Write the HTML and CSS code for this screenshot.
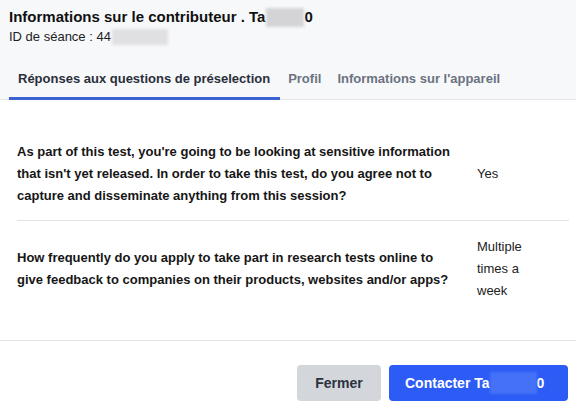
FILE: index.html
```html
<!DOCTYPE html>
<html lang="fr">
<head>
<meta charset="utf-8">
<link rel="stylesheet" href="styles.css">
</head>
<body>
<div class="modal">
  <header class="head">
    <h1 class="title">Informations sur le contributeur . Ta<span class="blur blur-title"></span>0</h1>
    <div class="session">ID de séance : 44<span class="blur blur-id"></span></div>
    <nav class="tabs">
      <span class="tab active">Réponses aux questions de préselection</span>
      <span class="tab">Profil</span>
      <span class="tab">Informations sur l'appareil</span>
    </nav>
  </header>
  <main class="body">
    <div class="row">
      <div class="q">As part of this test, you're going to be looking at sensitive information that isn't yet released. In order to take this test, do you agree not to capture and disseminate anything from this session?</div>
      <div class="a">Yes</div>
    </div>
    <div class="row">
      <div class="q">How frequently do you apply to take part in research tests online to give feedback to companies on their products, websites and/or apps?</div>
      <div class="a">Multiple times a week</div>
    </div>
  </main>
  <footer class="foot">
    <button class="btn btn-close">Fermer</button>
    <button class="btn btn-primary">Contacter Ta<span class="blur blur-btn"></span>0</button>
  </footer>
</div>
</body>
</html>
```
FILE: styles.css
```css
* { box-sizing: border-box; }
html, body { margin: 0; padding: 0; }
body {
  width: 576px;
  height: 405px;
  overflow: hidden;
  background: #ffffff;
  font-family: "Liberation Sans", Arial, sans-serif;
  color: #1a1a1a;
}
.modal { display: flex; flex-direction: column; }
.head {
  background: #f7f8fa;
  padding: 7px 0 0 9px;
  border-bottom: 1px solid #e3e5e8;
}
.title {
  margin: 0;
  font-size: 15px;
  font-weight: 700;
  line-height: 20px;
  color: #111;
  display: flex;
  align-items: center;
}
.session {
  margin-top: 1px;
  font-size: 13px;
  line-height: 18px;
  color: #222;
  display: flex;
  align-items: center;
}
.blur {
  display: inline-block;
  background: #d4d4d6;
  filter: blur(1.5px);
}
.blur-title { width: 38px; height: 19px; margin-left: 1px; }
.blur-id { width: 56px; height: 16px; margin-left: 1px; background: #e0e0e2; }
.tabs {
  display: flex;
  margin-top: 24px;
}
.tab {
  padding: 0 8px 9px 8px;
  font-size: 13px;
  font-weight: 700;
  line-height: 18px;
  color: #6b7280;
  border-bottom: 3px solid transparent;
  margin-bottom: -1px;
}
.tab.active {
  color: #2a2f3a;
  border-bottom-color: #3a62d0;
  padding-left: 9px;
  padding-right: 10px;
}
.tab + .tab:not(.active) { padding-left: 8px; }
.body {
  padding: 28px 7px 25px 17px;
  border-bottom: 1px solid #e3e3e3;
}
.row {
  display: flex;
  align-items: center;
  padding: 13px 0;
}
.row + .row { border-top: 1px solid #e3e3e3; padding-top: 15px; }
.q {
  width: 460px;
  padding-right: 18px;
  font-size: 13px;
  font-weight: 700;
  line-height: 22px;
  color: #161616;
}
.a {
  width: 70px;
  font-size: 13px;
  line-height: 22px;
  color: #222;
}
.foot {
  display: flex;
  justify-content: flex-end;
  gap: 8px;
  padding: 24px 8px 0 0;
}
.btn {
  height: 36px;
  border: none;
  border-radius: 4px;
  font-family: inherit;
  font-size: 14px;
  font-weight: 700;
  padding: 0 16px;
  display: flex;
  align-items: center;
}
.btn-close {
  width: 84px;
  justify-content: center;
  background: #d3d6db;
  color: #2b3240;
}
.btn-primary {
  width: 179px;
  padding-left: 16px;
  background: #2c5cf5;
  color: #fff;
}
.blur-btn { width: 47px; height: 22px; background: #4471f7; filter: blur(1px); }
```
